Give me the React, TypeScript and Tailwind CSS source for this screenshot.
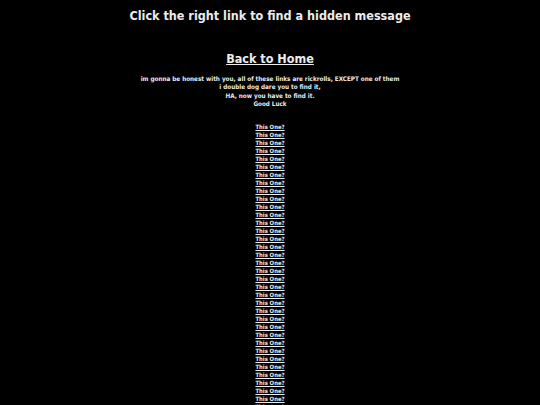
export default function App() {
  const links = Array.from({ length: 50 });
  return (
    <div
      className="min-h-screen bg-black text-center text-[#ececec] font-stretch-condensed antialiased"
      style={{ fontFamily: '"DejaVu Sans Condensed", "DejaVu Sans", sans-serif' }}
    >
      <h1 className="pt-[7px] text-[12.5px] leading-[18px] font-bold">
        Click the right link to find a hidden message
      </h1>
      <h2 className="mt-[25px] text-[12.5px] leading-[18px] font-bold">
        <a href="#" className="underline">Back to Home</a>
      </h2>
      <p className="mt-[7px] text-[6.3px] leading-[8.3px] font-bold">
        im gonna be honest with you, all of these links are rickrolls, EXCEPT one of them
        <br />i double dog dare you to find it,
        <br />HA, now you have to find it.
        <br />Good Luck
      </p>
      <div className="mt-[15px] flex flex-col items-center text-[5.9px] leading-[8px] font-bold">
        {links.map((_, i) => (
          <a key={i} href="#" className="underline">
            This One?
          </a>
        ))}
      </div>
    </div>
  );
}
